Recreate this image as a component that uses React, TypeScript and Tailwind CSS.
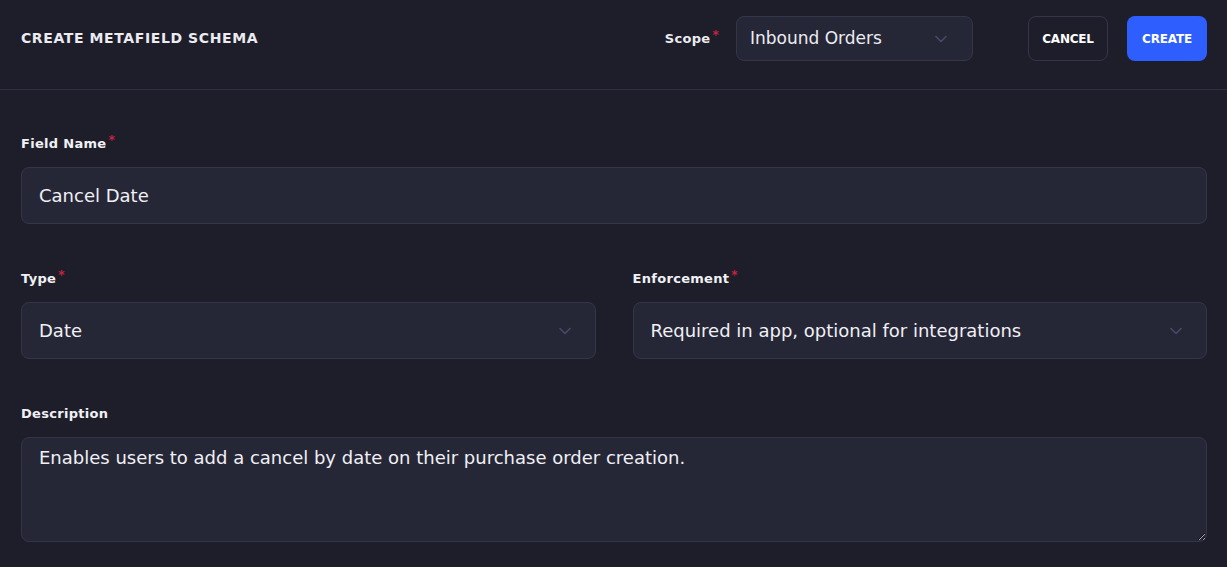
import React from "react";

const Chevron = () => (
  <svg width="12" height="8" viewBox="0 0 12 8" fill="none" className="shrink-0">
    <path d="M1 1.5L6 6.5L11 1.5" stroke="#48496a" strokeWidth="1.6" strokeLinecap="round" strokeLinejoin="round" />
  </svg>
);

const Label = ({ children, required }: { children: React.ReactNode; required?: boolean }) => (
  <div className="h-5 mb-[13px] flex items-center text-[13px] font-bold tracking-[0.3px] text-[#f1f1f5]">
    {children}
    {required && <span className="text-[#c8223f] ml-[2px] text-[12px] -mt-2">*</span>}
  </div>
);

export default function App() {
  return (
    <div
      className="w-[1227px] h-[567px] bg-[#1e1e2b] text-white overflow-hidden"
      style={{ fontFamily: '"DejaVu Sans", sans-serif' }}
    >
      <header className="flex items-center justify-between pt-4 pb-[28px] pl-[21px] pr-[20px] border-b border-[#2f3044]">
        <h1 className="text-[14px] font-bold tracking-[0.6px] text-[#ebebf0]">CREATE METAFIELD SCHEMA</h1>
        <div className="flex items-center h-[45px]">
          <span className="text-[13px] font-bold tracking-[0.3px] text-[#ebebf0] flex items-center">
            Scope<span className="text-[#c8223f] ml-[2px] text-[12px] -mt-2">*</span>
          </span>
          <div className="ml-[17px] w-[237px] h-[45px] rounded-lg bg-[#262736] border border-[#34354b] flex items-center justify-between pl-[13px] pr-[25px]">
            <span className="text-[17px] text-[#ececf2]">Inbound Orders</span>
            <Chevron />
          </div>
          <button className="ml-[55px] w-[80px] h-[45px] rounded-lg border border-[#34354b] text-[12px] font-bold text-white tracking-[-0.2px]">
            CANCEL
          </button>
          <button className="ml-[19px] w-[80px] h-[45px] rounded-lg bg-[#2f5eff] text-[12px] font-bold text-white tracking-[-0.2px]">
            CREATE
          </button>
        </div>
      </header>

      <main className="pl-[21px] pr-[20px] pt-[44px] flex flex-col gap-[45px]">
        <div>
          <Label required>Field Name</Label>
          <div className="h-[57px] rounded-lg bg-[#262736] border border-[#34354b] flex items-center pl-[17px] text-[18px] text-[#f0f0f5]">
            Cancel Date
          </div>
        </div>

        <div className="grid grid-cols-2 gap-[37px]">
          <div>
            <Label required>Type</Label>
            <div className="h-[57px] rounded-lg bg-[#262736] border border-[#34354b] flex items-center justify-between pl-[17px] pr-[24px] text-[18px] text-[#f0f0f5]">
              <span>Date</span>
              <Chevron />
            </div>
          </div>
          <div>
            <Label required>Enforcement</Label>
            <div className="h-[57px] rounded-lg bg-[#262736] border border-[#34354b] flex items-center justify-between pl-[17px] pr-[24px] text-[18px] text-[#f0f0f5]">
              <span>Required in app, optional for integrations</span>
              <Chevron />
            </div>
          </div>
        </div>

        <div>
          <Label>Description</Label>
          <textarea
            readOnly
            defaultValue="Enables users to add a cancel by date on their purchase order creation."
            className="block w-full h-[105px] rounded-lg bg-[#262736] border border-[#34354b] pl-[17px] pt-[8px] text-[18px] leading-[24px] text-[#f0f0f5] outline-none"
            style={{ fontFamily: '"DejaVu Sans", sans-serif' }}
          />
        </div>
      </main>
    </div>
  );
}
